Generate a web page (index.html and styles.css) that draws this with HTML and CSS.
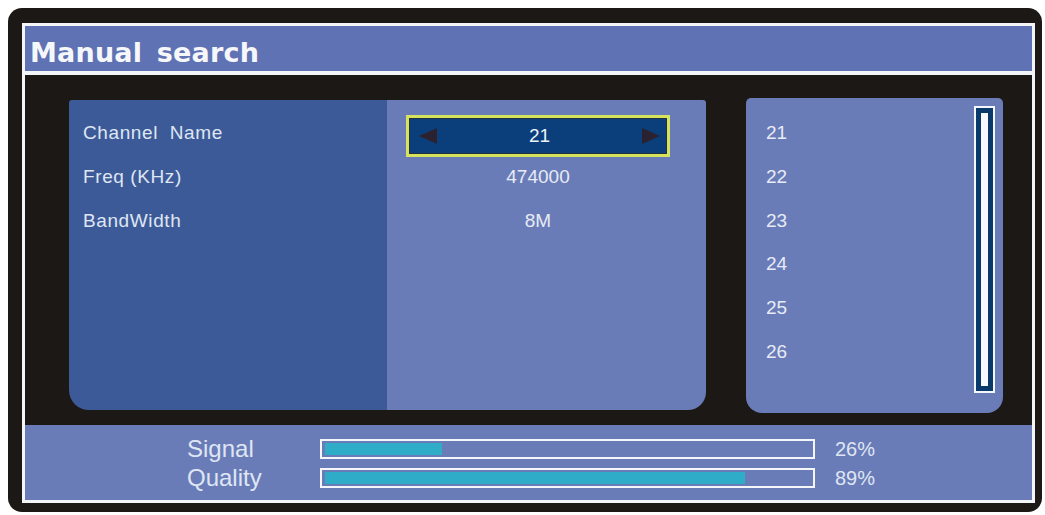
FILE: index.html
```html
<!DOCTYPE html>
<html>
<head>
<meta charset="utf-8">
<link rel="stylesheet" href="styles.css">
</head>
<body>
<div class="screen">
  <div class="frame">
    <div class="title">Manual search</div>
    <div class="content">
      <div class="main-panel">
        <div class="labels">
          <div class="row">Channel&nbsp; Name</div>
          <div class="row">Freq (KHz)</div>
          <div class="row">BandWidth</div>
        </div>
        <div class="values">
          <div class="row sel-row">
            <div class="selector">
              <svg class="arrow" width="20" height="18" viewBox="0 0 20 18"><polygon points="1,9 19,1 19,17" fill="#2a2230"/></svg>
              <span class="sel-text">21</span>
              <svg class="arrow" width="20" height="18" viewBox="0 0 20 18"><polygon points="19,9 1,1 1,17" fill="#2a2230"/></svg>
            </div>
          </div>
          <div class="row">474000</div>
          <div class="row">8M</div>
        </div>
      </div>
      <div class="list-panel">
        <div class="list">
          <div class="item">21</div>
          <div class="item">22</div>
          <div class="item">23</div>
          <div class="item">24</div>
          <div class="item">25</div>
          <div class="item">26</div>
        </div>
        <div class="scrollbar"><div class="thumb"></div></div>
      </div>
    </div>
    <div class="status">
      <div class="s-label">Signal</div>
      <div class="bar"><div class="fill" style="width:24%"></div></div>
      <div class="s-pct">26%</div>
      <div class="s-label">Quality</div>
      <div class="bar"><div class="fill" style="width:86.5%"></div></div>
      <div class="s-pct">89%</div>
    </div>
  </div>
</div>
</body>
</html>
```
FILE: styles.css
```css
html, body {
  margin: 0;
  padding: 0;
  background: #ffffff;
}
body {
  font-family: "Liberation Sans", Arial, sans-serif;
  width: 1045px;
  height: 515px;
  overflow: hidden;
}
.screen {
  margin: 8px 0 0 8px;
  width: 1034px;
  height: 504px;
  box-sizing: border-box;
  background: #1c1815;
  border-radius: 14px;
  padding: 15px 7px 9px 14px;
}
.frame {
  width: 1013px;
  height: 480px;
  box-sizing: border-box;
  border: 3px solid #f4f5f8;
  display: flex;
  flex-direction: column;
}
.title {
  height: 49px;
  box-sizing: border-box;
  background: #5f72b3;
  border-bottom: 4px solid #f4f5f8;
  color: #f6f7fb;
  font-family: "DejaVu Sans", "Liberation Sans", sans-serif;
  font-weight: bold;
  font-size: 27px;
  letter-spacing: 0.2px;
  word-spacing: 5px;
  padding: 7px 0 0 5px;
  line-height: 40px;
}
.content {
  height: 350px;
  background: #1c1815;
  display: flex;
  align-items: flex-start;
  padding: 0 0 0 44px;
  gap: 40px;
}
.main-panel {
  margin-top: 25px;
  width: 637px;
  height: 310px;
  display: flex;
  border-radius: 3px 3px 18px 20px;
  overflow: hidden;
}
.labels {
  width: 318px;
  background: #3d5a98;
  padding: 11px 0 0 14px;
  box-sizing: border-box;
  color: #dfe6f3;
  font-size: 19px;
  letter-spacing: 0.6px;
}
.values {
  flex: 1;
  background: #6a7cb8;
  padding: 11px 0 0 19px;
  box-sizing: border-box;
  color: #e6ebf5;
  font-size: 19px;
}
.row {
  height: 44px;
  line-height: 44px;
}
.values .row {
  width: 264px;
  text-align: center;
}
.values .sel-row {
  box-sizing: border-box;
  padding-top: 4px;
}
.selector {
  height: 42px;
  box-sizing: border-box;
  border: 3px solid #d6e35c;
  box-shadow: inset 0 0 0 1px #223040;
  background: #0b3f7b;
  display: flex;
  align-items: center;
  justify-content: space-between;
  padding: 0 6px 0 9px;
  line-height: 36px;
}
.sel-text {
  flex: 1;
  text-align: center;
  color: #eef2fa;
}
.arrow {
  display: block;
}
.list-panel {
  margin-top: 23px;
  width: 257px;
  height: 315px;
  box-sizing: border-box;
  background: #6a7cb8;
  border-radius: 5px 5px 16px 16px;
  display: flex;
  padding: 8px 8px 0 20px;
}
.list {
  flex: 1;
  padding-top: 5px;
  color: #e6ebf5;
  font-size: 19px;
}
.item {
  height: 43.8px;
  line-height: 43.8px;
}
.scrollbar {
  width: 21px;
  height: 287px;
  box-sizing: border-box;
  border: 2px solid #f4f6fa;
  background: #0a3a6c;
  padding: 5px;
}
.thumb {
  width: 100%;
  height: 100%;
  background: #f8fafd;
}
.status {
  flex: 1;
  background: #6a7cb8;
  display: grid;
  grid-template-columns: 133px 495px auto;
  grid-template-rows: 28px 28px;
  row-gap: 1px;
  column-gap: 0;
  align-items: center;
  padding: 10px 0 0 162px;
  box-sizing: border-box;
  color: #dfe6f3;
}
.s-label {
  font-size: 24px;
  line-height: 28px;
}
.bar {
  height: 20px;
  box-sizing: border-box;
  border: 2px solid #f4f6fa;
  padding: 2px 2px 2px 3px;
}
.fill {
  height: 100%;
  background: #2fadc8;
}
.s-pct {
  font-size: 20px;
  padding-left: 20px;
  line-height: 28px;
}
```
